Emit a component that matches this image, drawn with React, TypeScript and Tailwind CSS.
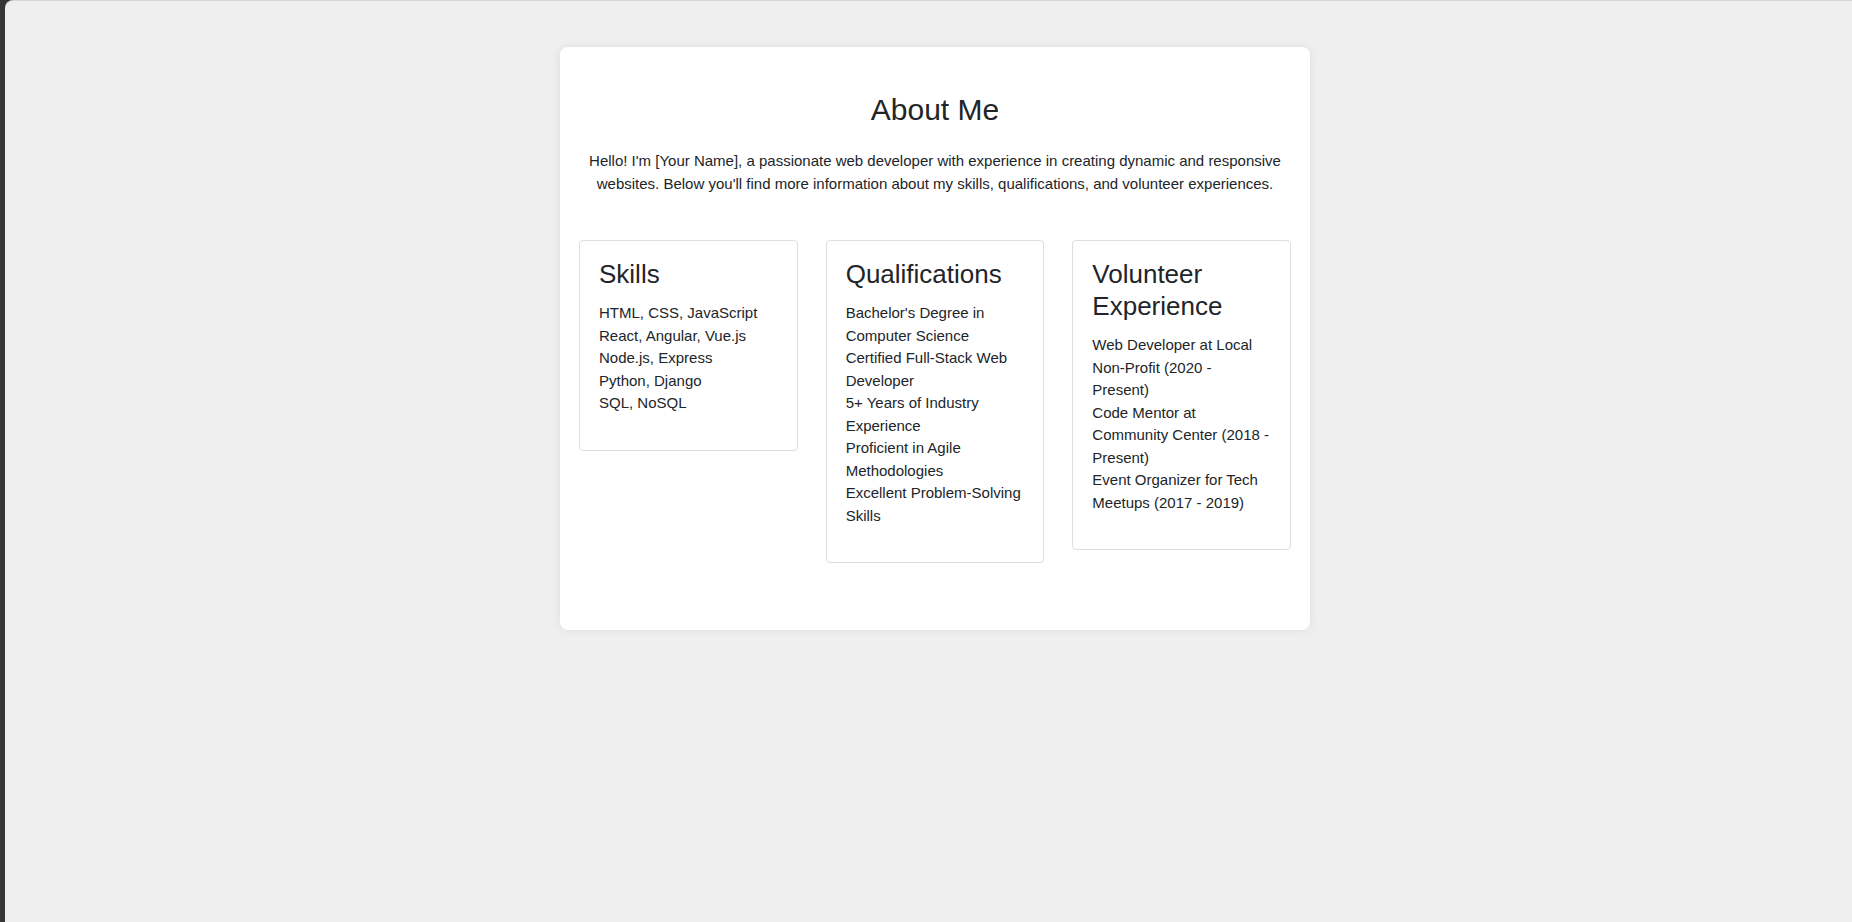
const skills = [
  "HTML, CSS, JavaScript",
  "React, Angular, Vue.js",
  "Node.js, Express",
  "Python, Django",
  "SQL, NoSQL",
];

const qualifications = [
  "Bachelor's Degree in Computer Science",
  "Certified Full-Stack Web Developer",
  "5+ Years of Industry Experience",
  "Proficient in Agile Methodologies",
  "Excellent Problem-Solving Skills",
];

const volunteer = [
  "Web Developer at Local Non-Profit (2020 - Present)",
  "Code Mentor at Community Center (2018 - Present)",
  "Event Organizer for Tech Meetups (2017 - 2019)",
];

const InfoCard = ({ title, items }: { title: string; items: string[] }) => {
  return (
    <div className="border border-[#dedede] rounded-[4px] bg-white px-[19px] pt-[17px] pb-[35px]">
      <h3 className="text-[26px] leading-[32px] font-normal text-[#212529]">{title}</h3>
      <ul className="mt-[12px] text-[15px] leading-[22.5px] text-[#212529]">
        {items.map((item) => (
          <li key={item}>{item}</li>
        ))}
      </ul>
    </div>
  );
};

export default function App() {
  return (
    <div
      className="min-h-[922px] bg-[#363636] pl-[5px]"
      style={{ fontFamily: '"Liberation Sans", Arial, sans-serif' }}
    >
      <div className="min-h-[922px] bg-[#efefef] border-t border-[#d6d6d6] rounded-tl-[8px] pt-[46px] pb-10">
        <div className="ml-[555px] w-[750px] bg-white rounded-[8px] shadow-[0_0_10px_rgba(0,0,0,0.08)] px-[19px] pt-[45px] pb-[67px]">
          <h1 className="text-center text-[30px] leading-[36px] font-normal text-[#212529]">About Me</h1>
          <p className="mt-[22px] text-center text-[15px] leading-[22.5px] text-[#212529]">
            Hello! I'm [Your Name], a passionate web developer with experience in creating dynamic and responsive
            websites. Below you'll find more information about my skills, qualifications, and volunteer experiences.
          </p>
          <div className="mt-[45px] grid grid-cols-3 gap-[28px] items-start">
            <InfoCard title="Skills" items={skills} />
            <InfoCard title="Qualifications" items={qualifications} />
            <InfoCard title="Volunteer Experience" items={volunteer} />
          </div>
        </div>
      </div>
    </div>
  );
}
